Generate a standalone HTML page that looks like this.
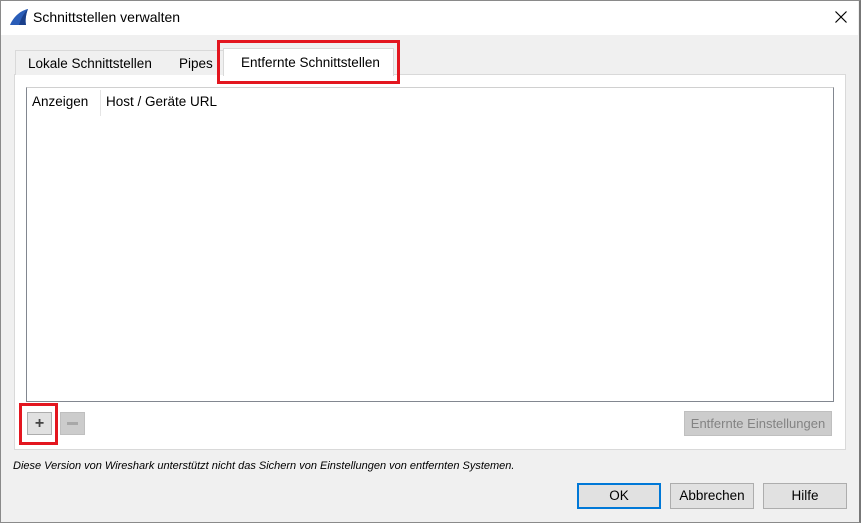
<!DOCTYPE html><html><head><style>
body{margin:0;width:861px;height:523px;position:relative;background:#f0f0f0;font-family:"Liberation Sans",sans-serif;font-size:13px;color:#000;overflow:hidden}
.a{position:absolute;box-sizing:border-box}
.btn{background:#e1e1e1;border:1px solid #adadad;text-align:center;line-height:23px;font-size:13.5px}
</style></head><body>
<div class="a" style="left:0;top:0;width:861px;height:523px;border:1px solid #8a8a8a;border-right:2px solid #777"></div>
<div class="a" style="left:1px;top:1px;width:857px;height:34px;background:#fff"></div>
<svg class="a" style="left:9px;top:8px" width="20" height="18"><path d="M1 17 C4 10 10 3 19 1 C17 6 16 12 17 17 Z" fill="#2a5db8"/><path d="M10 17 C12 10 15 5 19 1 C17 6 16 12 17 17Z" fill="#1a3f8a"/></svg>
<div class="a" style="left:33px;top:9px;font-size:14px">Schnittstellen verwalten</div>
<svg class="a" style="left:835px;top:11px" width="12" height="12"><path d="M0.5 0.5L11.5 11.5M11.5 0.5L0.5 11.5" stroke="#000" stroke-width="1.2"/></svg>
<div class="a" style="left:14px;top:74px;width:832px;height:376px;background:#fff;border:1px solid #d9d9d9"></div>
<div class="a" style="left:15px;top:50px;width:151px;height:25px;background:#f0f0f0;border:1px solid #d9d9d9;border-bottom:none;line-height:25px;padding-left:12px;font-size:13.5px">Lokale Schnittstellen</div>
<div class="a" style="left:165px;top:50px;width:59px;height:25px;background:#f0f0f0;border:1px solid #d9d9d9;border-bottom:none;border-left:none;line-height:25px;padding-left:14px;font-size:13.5px">Pipes</div>
<div class="a" style="left:223px;top:48px;width:171px;height:28px;background:#fff;border:1px solid #d9d9d9;border-bottom:none;line-height:28px;padding-left:17px;font-size:13.5px">Entfernte Schnittstellen</div>
<div class="a" style="left:217px;top:40px;width:183px;height:44px;border:3px solid #e3161f"></div>
<div class="a" style="left:26px;top:87px;width:808px;height:315px;background:#fff;border:1px solid #828790;border-top-color:#d0d0d0"></div>
<div class="a" style="left:32px;top:94px;font-size:13.5px">Anzeigen</div>
<div class="a" style="left:100px;top:90px;width:1px;height:26px;background:#e5e5e5"></div>
<div class="a" style="left:106px;top:94px;font-size:13.5px">Host / Geräte URL</div>
<div class="a btn" style="left:27px;top:412px;width:25px;height:23px;font-weight:bold;color:#444;line-height:21px;font-size:16px">+</div>
<div class="a" style="left:19px;top:403px;width:39px;height:42px;border:3px solid #e3161f"></div>
<div class="a" style="left:60px;top:412px;width:25px;height:23px;background:#cccccc;border:1px solid #bfbfbf"></div>
<div class="a" style="left:67px;top:422px;width:11px;height:3px;background:#a8a8a8"></div>
<div class="a btn" style="left:684px;top:411px;width:148px;height:25px;background:#cccccc;border-color:#bfbfbf;color:#838383;font-size:13px">Entfernte Einstellungen</div>
<div class="a" style="left:13px;top:460px;font-size:11px;font-style:italic">Diese Version von Wireshark unterstützt nicht das Sichern von Einstellungen von entfernten Systemen.</div>
<div class="a btn" style="left:577px;top:483px;width:84px;height:26px;border:2px solid #0078d7;line-height:22px">OK</div>
<div class="a btn" style="left:670px;top:483px;width:84px;height:26px;line-height:24px">Abbrechen</div>
<div class="a btn" style="left:763px;top:483px;width:84px;height:26px;line-height:24px">Hilfe</div>
</body></html>
